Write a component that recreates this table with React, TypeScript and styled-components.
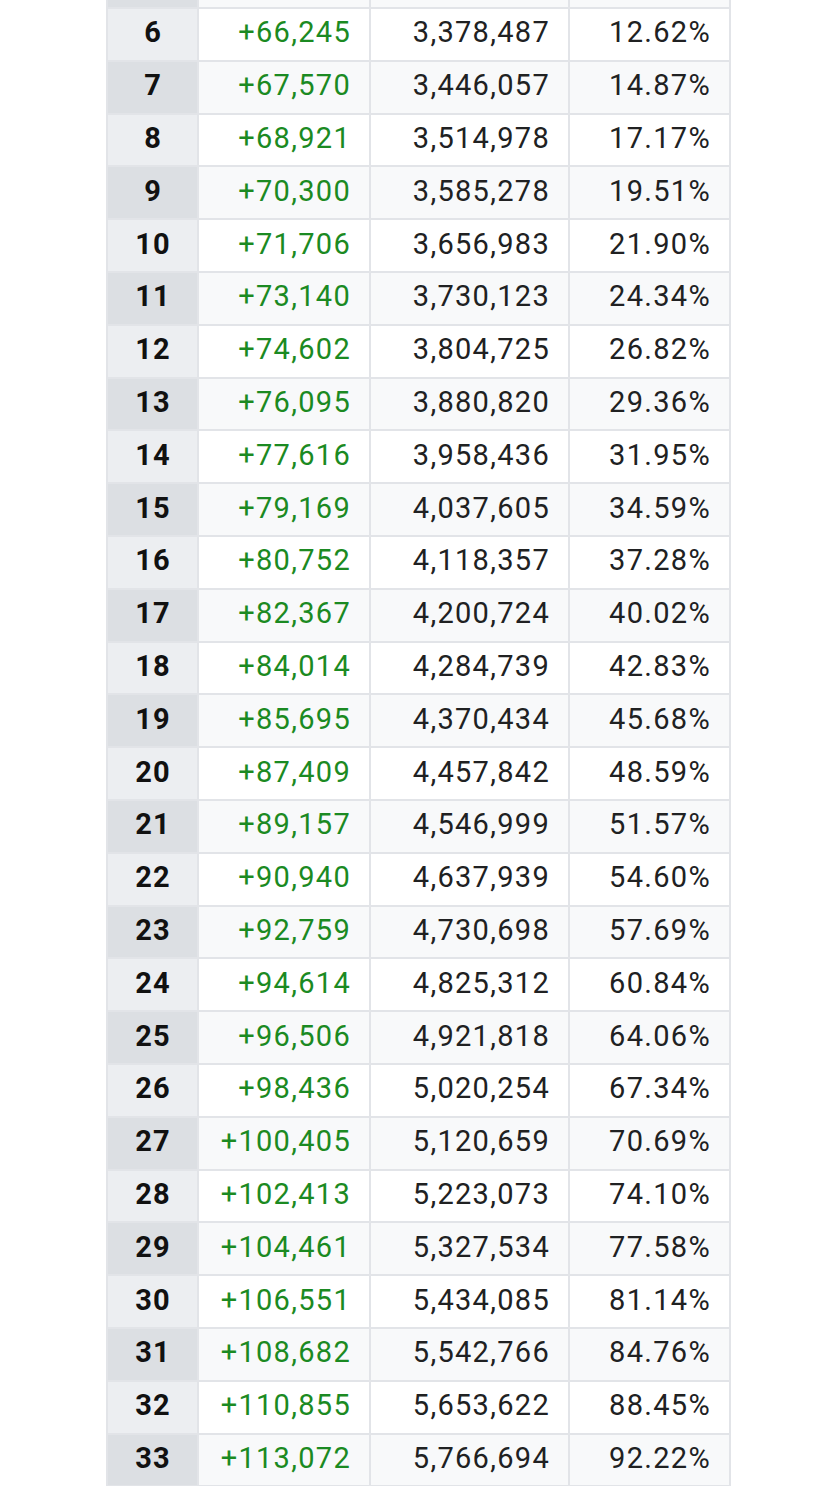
import React from 'react';
import styled, { createGlobalStyle } from 'styled-components';

const GlobalStyle = createGlobalStyle`
  html, body {
    margin: 0;
    padding: 0;
    background: #ffffff;
  }
  body {
    font-family: Roboto, 'Noto Sans', sans-serif;
    overflow: hidden;
  }
`;

const Page = styled.div`
  width: 835px;
  height: 1486px;
  overflow: hidden;
  background: #ffffff;
`;

const Table = styled.table`
  margin: -45.8px 0 0 106px;
  width: 623px;
  border-collapse: collapse;
  table-layout: fixed;
  font-size: 29px;
  color: #202122;
`;

const Col = styled.col<{ $w: number }>`
  width: ${(p) => p.$w}px;
`;

const Row = styled.tr`
  height: 52.8px;
`;

const DayCell = styled.td<{ $odd: boolean }>`
  border: 2px solid #e2e4e8;
  background: ${(p) => (p.$odd ? '#dcdfe3' : '#eceef1')};
  text-align: center;
  font-weight: 700;
  color: #111;
  padding: 0 0 3px 1px;
  letter-spacing: 1px;
  line-height: 1;
`;

const Cell = styled.td<{ $odd: boolean; $green?: boolean }>`
  border: 2px solid #e2e4e8;
  background: ${(p) => (p.$odd ? '#f8f9fa' : '#ffffff')};
  color: ${(p) => (p.$green ? '#1b8a22' : '#202122')};
  text-align: right;
  padding: 0 18px 3px 0;
  letter-spacing: 1.3px;
  line-height: 1;
`;

const fmt = (n: number) => n.toLocaleString('en-US');

const rows: [number, number, number, string][] = [
  [5, 64946, 3312242, '10.41%'],
  [6, 66245, 3378487, '12.62%'],
  [7, 67570, 3446057, '14.87%'],
  [8, 68921, 3514978, '17.17%'],
  [9, 70300, 3585278, '19.51%'],
  [10, 71706, 3656983, '21.90%'],
  [11, 73140, 3730123, '24.34%'],
  [12, 74602, 3804725, '26.82%'],
  [13, 76095, 3880820, '29.36%'],
  [14, 77616, 3958436, '31.95%'],
  [15, 79169, 4037605, '34.59%'],
  [16, 80752, 4118357, '37.28%'],
  [17, 82367, 4200724, '40.02%'],
  [18, 84014, 4284739, '42.83%'],
  [19, 85695, 4370434, '45.68%'],
  [20, 87409, 4457842, '48.59%'],
  [21, 89157, 4546999, '51.57%'],
  [22, 90940, 4637939, '54.60%'],
  [23, 92759, 4730698, '57.69%'],
  [24, 94614, 4825312, '60.84%'],
  [25, 96506, 4921818, '64.06%'],
  [26, 98436, 5020254, '67.34%'],
  [27, 100405, 5120659, '70.69%'],
  [28, 102413, 5223073, '74.10%'],
  [29, 104461, 5327534, '77.58%'],
  [30, 106551, 5434085, '81.14%'],
  [31, 108682, 5542766, '84.76%'],
  [32, 110855, 5653622, '88.45%'],
  [33, 113072, 5766694, '92.22%'],
];

export default function App() {
  return (
    <Page>
      <GlobalStyle />
      <Table>
        <colgroup>
          <Col $w={91} />
          <Col $w={172} />
          <Col $w={199} />
          <Col $w={161} />
        </colgroup>
        <tbody>
          {rows.map(([day, delta, total, pct]) => {
            const odd = day % 2 === 1;
            return (
              <Row key={day}>
                <DayCell $odd={odd}>{day}</DayCell>
                <Cell $odd={odd} $green>
                  +{fmt(delta)}
                </Cell>
                <Cell $odd={odd}>{fmt(total)}</Cell>
                <Cell $odd={odd}>{pct}</Cell>
              </Row>
            );
          })}
        </tbody>
      </Table>
    </Page>
  );
}
